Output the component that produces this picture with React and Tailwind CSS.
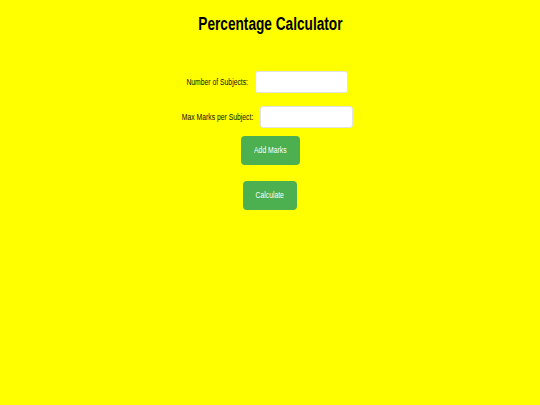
export default function App() {
  const font = { fontFamily: '"Liberation Sans", Arial, sans-serif' };
  return (
    <div className="w-[540px] h-[405px] bg-[#ffff00] flex flex-col items-center text-black" style={font}>
      <h1 className="mt-[13px] text-[17.5px] leading-[22px] font-bold">
        <span className="inline-block whitespace-nowrap scale-x-[0.78]">Percentage Calculator</span>
      </h1>
      <div className="mt-[36px] flex items-center gap-[7px] pr-[5px]">
        <label className="w-[61px] flex justify-end text-[8.5px] text-[#111]">
          <span className="inline-block shrink-0 whitespace-nowrap origin-right scale-x-[0.8]">Number of Subjects:</span>
        </label>
        <input className="w-[93px] h-[22px] bg-white border border-[#e2e2e2] rounded-[3px] outline-none" />
      </div>
      <div className="mt-[13px] flex items-center gap-[7px] pr-[5px]">
        <label className="w-[71px] flex justify-end text-[8.5px] text-[#111]">
          <span className="inline-block shrink-0 whitespace-nowrap origin-right scale-x-[0.8]">Max Marks per Subject:</span>
        </label>
        <input className="w-[93px] h-[22px] bg-white border border-[#e2e2e2] rounded-[3px] outline-none" />
      </div>
      <button className="mt-[8px] w-[59px] h-[29px] bg-[#4caf50] text-white text-[8.5px] rounded-[4px]">
        <span className="inline-block whitespace-nowrap scale-x-[0.8]">Add Marks</span>
      </button>
      <button className="mt-[16px] w-[54px] h-[29px] bg-[#4caf50] text-white text-[8.5px] rounded-[4px]">
        <span className="inline-block whitespace-nowrap scale-x-[0.8]">Calculate</span>
      </button>
    </div>
  );
}
